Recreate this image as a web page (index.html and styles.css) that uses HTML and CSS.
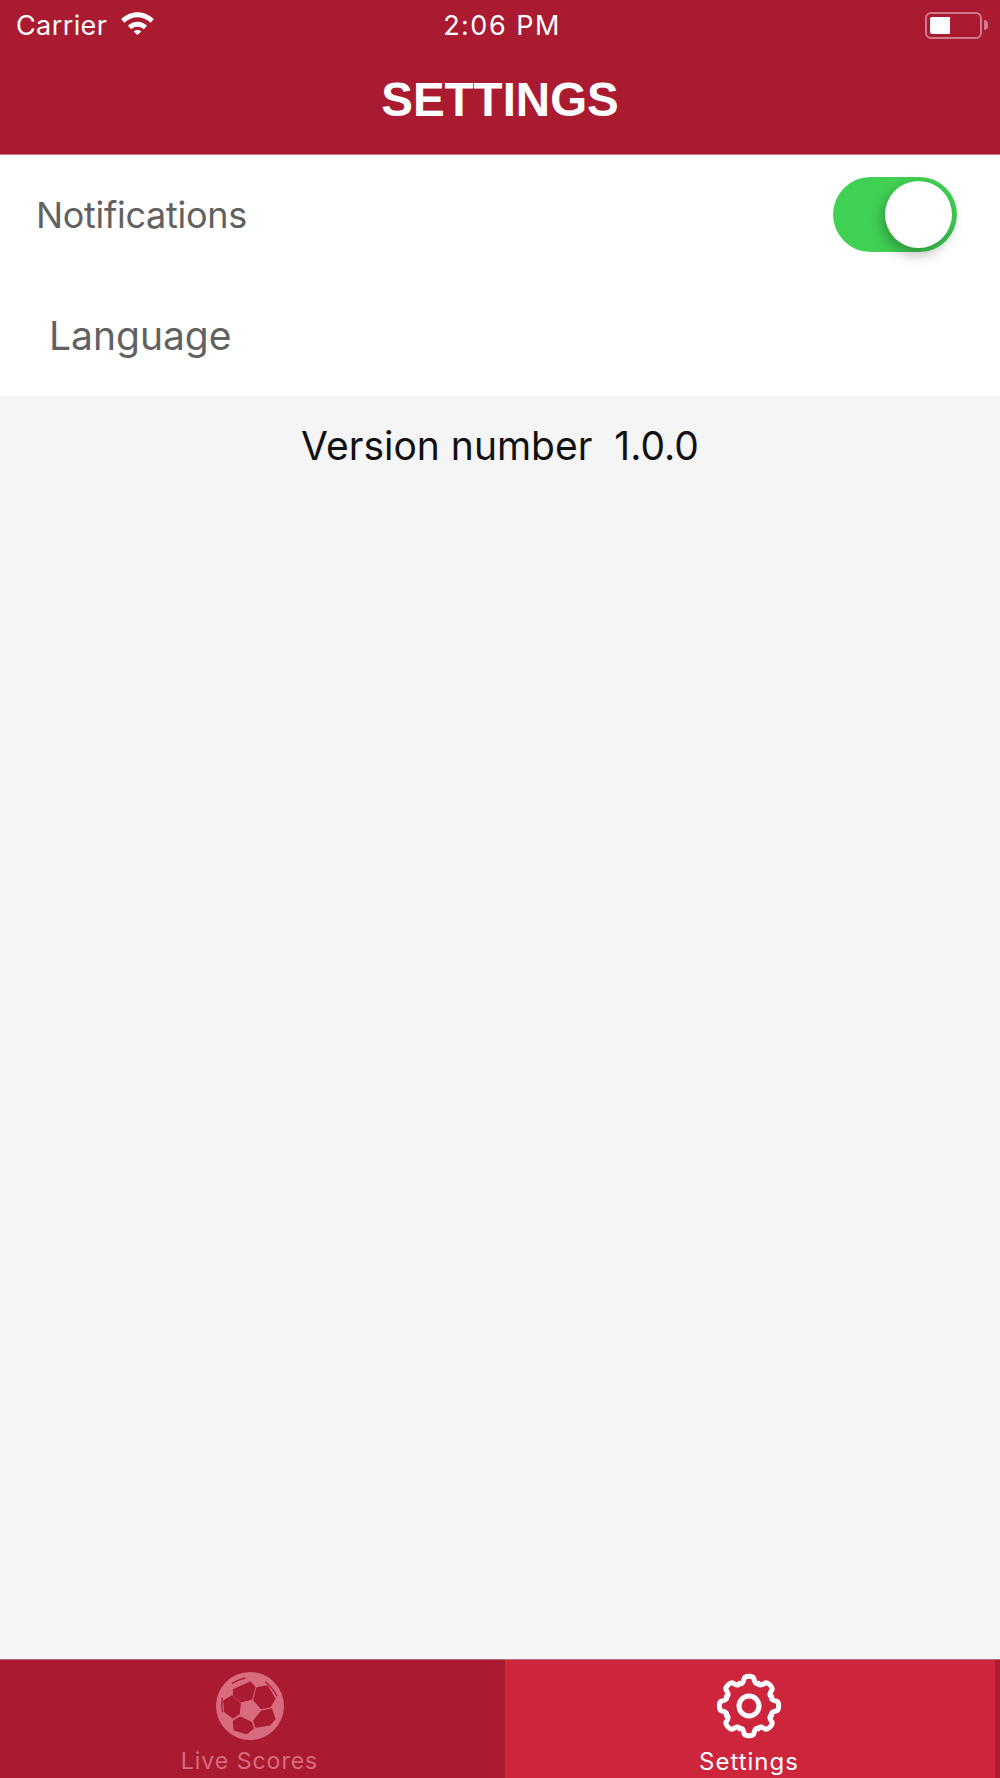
FILE: index.html
```html
<!DOCTYPE html>
<html lang="en">
<head>
    <meta charset="UTF-8">
    <meta name="viewport" content="width=device-width, initial-scale=1.0">
    <title>Settings</title>
    <link rel="stylesheet" href="styles.css">
</head>
<body>
    <header class="top-bar">
        <div class="status-bar">
            <div class="status-left">
                <span class="status-carrier">Carrier</span>
                <svg class="wifi-icon" viewBox="0 0 36 25" width="35" height="24">
                    <path d="M1 8.5C10.5 -1.2 25.5 -1.2 35 8.5L31.5 12.3C23.8 4.6 12.2 4.6 4.5 12.3Z"/>
                    <path d="M8 15.4C13.8 9.9 22.2 9.9 28 15.4L24.6 19C20.7 15.6 15.3 15.6 11.4 19Z"/>
                    <path d="M14 21.3C16.4 19.4 19.6 19.4 22 21.3L18 25Z"/>
                </svg>
            </div>
            <span class="status-time">2:06 PM</span>
            <div class="status-right">
                <div class="battery"><div class="battery-level"></div></div>
                <div class="battery-nub"></div>
            </div>
        </div>
        <h1 class="page-title">SETTINGS</h1>
    </header>

    <main class="content">
        <section class="settings-list">
            <div class="row row-notifications">
                <span class="row-label">Notifications</span>
                <div class="toggle"><div class="toggle-knob"></div></div>
            </div>
            <div class="row row-language">
                <span class="row-label">Language</span>
            </div>
        </section>
        <p class="version">Version number&nbsp; 1.0.0</p>
    </main>

    <nav class="tab-bar">
        <div class="tab tab-inactive">
            <svg class="tab-icon" viewBox="197 95 204 204" width="68" height="68">
                <circle cx="299" cy="197" r="102" fill="#d96b7e"/>
                <g fill="#aa1b32" stroke="#aa1b32" stroke-width="5" stroke-linejoin="round">
                    <path d="M250 148L300 126L313 141L303 176L272 184L250 165Z"/>
                    <path d="M320 143L350 137L373 175L360 198L333 204L311 179Z"/>
                    <path d="M221 182L245 168L269 190L266 220L248 232L224 214Z"/>
                    <path d="M334 213L363 207L373 235L358 253L317 260L311 241Z"/>
                    <path d="M250 243L270 231L303 247L308 264L289 279L252 268Z"/>
                </g>
                <g fill="none" stroke="#aa1b32" stroke-width="4">
                    <path d="M245 129Q265 117 285 113"/>
                    <path d="M345 124Q368 142 380 168"/>
                    <path d="M216 172Q212 195 217 215"/>
                </g>
            </svg>
            <span class="tab-label">Live Scores</span>
        </div>
        <div class="tab tab-active">
            <svg class="tab-icon" viewBox="-34 -34 68 68" width="68" height="68">
                <defs>
                    <path id="gear-tooth" d="M-9.4 -22.6C-6.6 -21.6 -5.6 -24 -5 -27C-4.4 -30.6 4.4 -30.6 5 -27C5.6 -24 6.6 -21.6 9.4 -22.6"/>
                </defs>
                <g fill="none" stroke="#fff" stroke-width="5" stroke-linecap="round" stroke-linejoin="round">
                    <use href="#gear-tooth"/>
                    <use href="#gear-tooth" transform="rotate(45)"/>
                    <use href="#gear-tooth" transform="rotate(90)"/>
                    <use href="#gear-tooth" transform="rotate(135)"/>
                    <use href="#gear-tooth" transform="rotate(180)"/>
                    <use href="#gear-tooth" transform="rotate(225)"/>
                    <use href="#gear-tooth" transform="rotate(270)"/>
                    <use href="#gear-tooth" transform="rotate(315)"/>
                    <circle r="10"/>
                </g>
            </svg>
            <span class="tab-label">Settings</span>
        </div>
    </nav>
</body>
</html>
```

FILE: styles.css
```css
* {
    box-sizing: border-box;
}
html, body {
    height: 100%;
}
body {
    margin: 0;
    height: 1778px;
    overflow: hidden;
    display: flex;
    flex-direction: column;
    font-family: Inter, "Liberation Sans", sans-serif;
    background: #f5f5f5;
}
.top-bar {
    height: 155px;
    background: #aa1b32;
    border-bottom: 1px solid #c9808c;
    color: #fff;
}
.status-bar {
    display: grid;
    grid-template-columns: 1fr auto 1fr;
    align-items: center;
    height: 50px;
    padding: 0 12px 0 16px;
    font-size: 27px;
}
.status-left {
    display: flex;
    align-items: center;
    gap: 13px;
}
.status-carrier {
    letter-spacing: 0.4px;
}
.wifi-icon {
    fill: #fff;
    margin-top: -4px;
}
.status-time {
    letter-spacing: 1.5px;
}
.status-right {
    display: flex;
    justify-content: flex-end;
    align-items: center;
    gap: 2px;
}
.battery {
    width: 57px;
    height: 27px;
    padding: 3px;
    border: 2px solid #cf7b89;
    border-radius: 6px;
}
.battery-level {
    width: 20px;
    height: 100%;
    background: #fff;
    border-radius: 2px 0 0 2px;
}
.battery-nub {
    width: 4px;
    height: 10px;
    background: #cf7b89;
    border-radius: 0 4px 4px 0;
}
.page-title {
    margin: 25px 0 0;
    text-align: center;
    font-family: "Liberation Sans", sans-serif;
    font-size: 47.5px;
    line-height: 50px;
    font-weight: 700;
}
.settings-list {
    background: #fff;
    height: 241px;
}
.row {
    display: flex;
    align-items: center;
    justify-content: space-between;
    color: #616161;
}
.row-notifications {
    height: 119px;
    padding: 0 43px 0 36px;
    font-size: 36px;
    letter-spacing: -0.3px;
}
.row-language {
    height: 122px;
    padding-left: 49px;
    font-size: 39px;
}
.toggle {
    width: 124px;
    height: 75px;
    padding: 4px 5px;
    display: flex;
    justify-content: flex-end;
    background: #40d154;
    border-radius: 38px;
}
.toggle-knob {
    width: 67px;
    height: 67px;
    background: #fff;
    border-radius: 50%;
    box-shadow: -2px 6px 14px rgba(0, 0, 0, 0.3);
}
.content {
    flex: 1;
}
.version {
    margin: 28px 0 0;
    text-align: center;
    font-size: 39px;
    line-height: 44px;
    color: #111;
}
.tab-bar {
    height: 119px;
    display: flex;
    background: #aa1b32;
    border-top: 1px solid #b9707c;
}
.tab {
    display: flex;
    flex-direction: column;
    align-items: center;
    padding-top: 12px;
}
.tab-inactive {
    width: 505px;
    padding-right: 6px;
    font-size: 23px;
    color: #d96b7e;
}
.tab-active {
    width: 490px;
    padding-right: 2px;
    background: #cd253c;
    font-size: 24px;
    color: #fff;
}
.tab-icon {
    display: block;
}
.tab-label {
    margin-top: 7px;
    letter-spacing: 1px;
}
```
